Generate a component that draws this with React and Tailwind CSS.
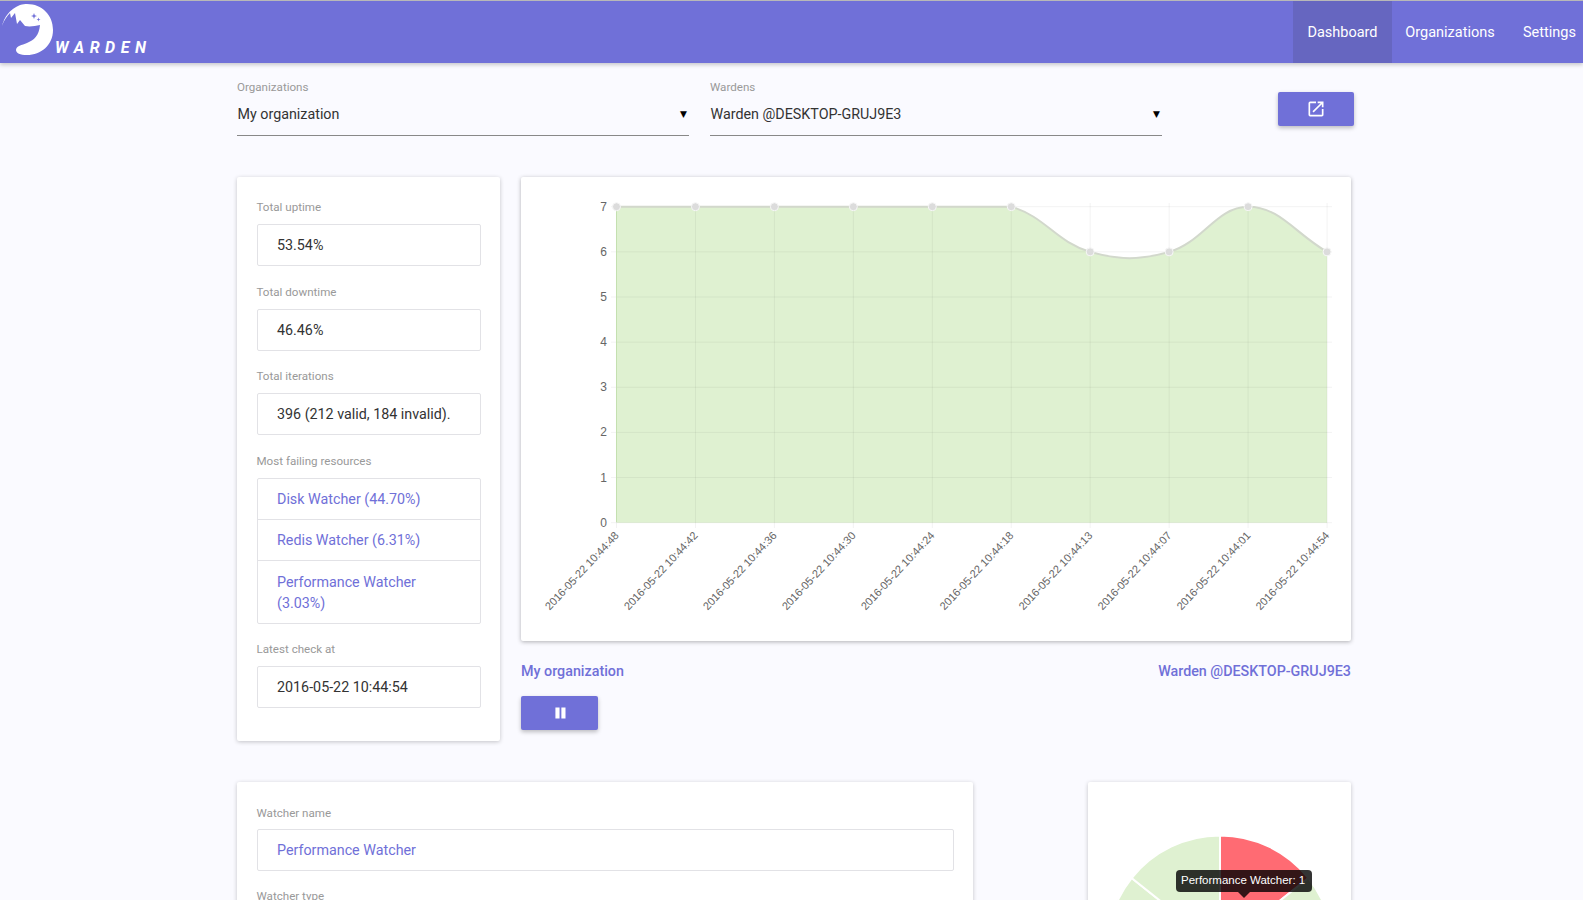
const xLabels = ["10:44:48", "10:44:42", "10:44:36", "10:44:30", "10:44:24", "10:44:18", "10:44:13", "10:44:07", "10:44:01", "10:44:54"];
const values = [7, 7, 7, 7, 7, 7, 6, 6, 7, 6];
const failing = ["Disk Watcher (44.70%)", "Redis Watcher (6.31%)"];

const chartX = (i) => 616.5 + i * 78.95;
const chartY = (v) => 522.7 - v * 45.14;
const points = values.map((v, i) => ({ x: chartX(i), y: chartY(v) }));

// same spline as chart.js with tension .4, control points capped at the chart top
function splinePath(pts) {
  const top = chartY(7);
  const ctrl = pts.map((p, i) => {
    const prev = pts[i - 1] || p;
    const next = pts[i + 1] || p;
    const d01 = Math.hypot(p.x - prev.x, p.y - prev.y);
    const d12 = Math.hypot(next.x - p.x, next.y - p.y);
    const fa = (0.4 * d01) / (d01 + d12 || 1);
    const fb = (0.4 * d12) / (d01 + d12 || 1);
    return {
      px: p.x - fa * (next.x - prev.x),
      py: Math.max(top, p.y - fa * (next.y - prev.y)),
      nx: p.x + fb * (next.x - prev.x),
      ny: Math.max(top, p.y + fb * (next.y - prev.y)),
    };
  });
  let d = `M${pts[0].x} ${pts[0].y}`;
  for (let i = 1; i < pts.length; i++) {
    d += ` C${ctrl[i - 1].nx} ${ctrl[i - 1].ny} ${ctrl[i].px} ${ctrl[i].py} ${pts[i].x} ${pts[i].y}`;
  }
  return d;
}

function Logo() {
  return (
    <svg width="56" height="56" viewBox="0 0 56 56" className="shrink-0">
      <path
        fill="#fff"
        d="M2 25 C4 16 10 8 20 4 C23 3.300 25 3 27 3 C42 3 53 14 53 29 C53 44 41 54 27 54 C20 54 16 52 16 49 C16 45 22 44 27 42 C34 39 39 35 40 24 C35 25 30 26 25 25 L20 19 L17 23 L15 12 L11 17 L10 12 C7 15 4 19 2 25Z"
      />
      <path fill="#7070d8" d="M34 12 L34.800 14.200 L37 15 L34.800 15.800 L34 18 L33.200 15.800 L31 15 L33.200 14.200Z M38.500 16.500 L39 18 L40.500 18.500 L39 19 L38.500 20.500 L38 19 L36.500 18.500 L38 18Z" />
    </svg>
  );
}

function Field({ label, value, className }) {
  return (
    <div className={className}>
      <div className="text-[11.600px] leading-4 text-[#999] mb-[9px]">{label}</div>
      <div className="h-[42px] border border-[#e2e2e6] rounded-[2px] pl-[19.500px] pt-[1px] flex items-center text-[14.300px] text-[#333]">{value}</div>
    </div>
  );
}

function SelectBox({ label, value, className }) {
  return (
    <div className={className}>
      <div className="text-[11.600px] leading-4 text-[#999]">{label}</div>
      <div className="h-[38px] mt-[3px] border-b border-[#888] flex items-center justify-between pl-[0.500px] pr-[2px] pb-[4px] text-[14.300px] text-[#333]">
        <span>{value}</span>
        <span className="text-[9px] text-black font-['DejaVu_Sans']">▼</span>
      </div>
    </div>
  );
}

function LineChart() {
  const line = splinePath(points);
  return (
    <svg width="830" height="463" viewBox="521 177 830 463" className="block">
      <path d={`${line} L${points[9].x} 522.700 L${points[0].x} 522.700Z`} fill="#dff1d1" />
      {[0, 1, 2, 3, 4, 5, 6, 7].map((v) => (
        <line key={v} x1="611" x2="1332" y1={chartY(v)} y2={chartY(v)} stroke="rgba(0,0,0,0.05)" />
      ))}
      {points.map((p, i) => (
        <line key={i} x1={p.x} x2={p.x} y1="203" y2="528" stroke="rgba(0,0,0,0.05)" />
      ))}
      <line x1={points[0].x} x2={points[0].x} y1="207" y2="522" stroke="#c4e0b0" />
      <path d={line} fill="none" stroke="#d2d8cc" strokeWidth="2" />
      {points.map((p, i) => (
        <circle key={i} cx={p.x} cy={p.y} r="4" fill="#dcdcdc" stroke="#f7f7f7" />
      ))}
      {[0, 1, 2, 3, 4, 5, 6, 7].map((v) => (
        <text key={v} x="607" y={chartY(v) + 4} textAnchor="end" fontSize="12" fill="#666" fontFamily="'Liberation Sans', sans-serif">
          {v}
        </text>
      ))}
      {points.map((p, i) => (
        <text
          key={i}
          x={p.x + 3}
          y="536"
          textAnchor="end"
          fontSize="11"
          fill="#666"
          fontFamily="'Liberation Sans', sans-serif"
          transform={`rotate(-47 ${p.x + 3} 536)`}
        >
          {`2016-05-22 ${xLabels[i]}`}
        </text>
      ))}
    </svg>
  );
}

function PieChart() {
  const cx = 132;
  const cy = 166.5;
  const r = 113;
  const slices = [0, 1, 2, 3, 4, 5, 6].map((i) => {
    const a0 = (i * 2 * Math.PI) / 7;
    const a1 = ((i + 1) * 2 * Math.PI) / 7;
    return {
      d: `M${cx} ${cy} L${cx + r * Math.sin(a0)} ${cy - r * Math.cos(a0)} A${r} ${r} 0 0 1 ${cx + r * Math.sin(a1)} ${cy - r * Math.cos(a1)}Z`,
      fill: i === 0 ? "#ff6b73" : "#dff1d1",
    };
  });
  return (
    <svg width="263" height="300" className="block">
      {slices.map((s, i) => (
        <path key={i} d={s.d} fill={s.fill} stroke="#fff" strokeWidth="2" />
      ))}
    </svg>
  );
}

export default function App() {
  return (
    <div className="h-screen overflow-hidden bg-[#fafaff] font-['Roboto',sans-serif]">
      <nav className="h-[63px] bg-[#7070d8] border-t border-t-[#b8b8b8] shadow-[0_2px_4px_rgba(0,0,0,0.2)] flex items-stretch justify-between relative">
        <div className="flex items-start">
          <Logo />
          <span className="mt-[37px] -ml-[1px] text-[16px] leading-5 font-bold italic tracking-[5.500px] text-white">WARDEN</span>
        </div>
        <div className="flex text-[14.500px] text-white">
          <a className="w-[99px] pt-[2px] bg-[#6666c0] flex items-center justify-center">Dashboard</a>
          <a className="w-[116px] pt-[2px] flex items-center justify-center">Organizations</a>
          <a className="w-[75px] pt-[2px] flex items-center justify-start pl-[15px]">Settings</a>
        </div>
      </nav>

      <main className="ml-[237px] w-[1117px]">
        <div className="flex items-start pt-[16px] h-[114px]">
          <SelectBox label="Organizations" value="My organization" className="w-[452px]" />
          <SelectBox label="Wardens" value="Warden @DESKTOP-GRUJ9E3" className="w-[452px] ml-[21px]" />
          <button className="ml-[115.500px] mt-[13px] w-[76.500px] h-[34px] bg-[#7070d8] rounded-[2px] shadow-[0_2px_4px_rgba(0,0,0,0.25)] flex items-center justify-center">
            <svg width="20" height="20" viewBox="0 0 24 24" fill="#fff">
              <path d="M19 19H5V5h7V3H5a2 2 0 0 0-2 2v14a2 2 0 0 0 2 2h14c1.100 0 2-.9 2-2v-7h-2v7zM14 3v2h3.590l-9.830 9.830 1.410 1.410L19 6.410V10h2V3h-7z" />
            </svg>
          </button>
        </div>

        <div className="flex items-start gap-[21px]">
          <section className="w-[263px] h-[564px] bg-white rounded-[2px] shadow-[0_1px_4px_rgba(0,0,0,0.22)] pt-[22px] px-[19.500px]">
            <Field label="Total uptime" value="53.54%" className="mb-[18px]" />
            <Field label="Total downtime" value="46.46%" className="mb-[17px]" />
            <Field label="Total iterations" value="396 (212 valid, 184 invalid)." className="mb-[18px]" />
            <div className="mb-[17px]">
              <div className="text-[11.600px] leading-4 text-[#999] mb-[9px]">Most failing resources</div>
              <div className="border border-[#e2e2e6] rounded-[2px] text-[14.300px] text-[#7070d8]">
                {failing.map((f) => (
                  <div key={f} className="h-[41px] pl-[19.500px] pt-[1px] flex items-center border-b border-[#e2e2e6]">{f}</div>
                ))}
                <div className="pl-[19.500px] pt-[11px] pb-[9px] pr-4 leading-[21px]">Performance Watcher (3.03%)</div>
              </div>
            </div>
            <Field label="Latest check at" value="2016-05-22 10:44:54" />
          </section>

          <div className="w-[830px]">
            <section className="h-[464px] bg-white rounded-[2px] shadow-[0_1px_4px_rgba(0,0,0,0.3)]">
              <LineChart />
            </section>
            <div className="flex justify-between mt-[20px] text-[14.300px] leading-5 font-medium text-[#7070d8]">
              <span>My organization</span>
              <span>Warden @DESKTOP-GRUJ9E3</span>
            </div>
            <button className="mt-[15px] w-[77px] h-[34px] bg-[#7070d8] rounded-[2px] shadow-[0_2px_4px_rgba(0,0,0,0.25)] flex items-center justify-center">
              <svg width="22" height="22" viewBox="0 0 24 24" fill="#fff">
                <path d="M7 6h4.500v12H7zM13.500 6H18v12h-4.500z" />
              </svg>
            </button>
          </div>
        </div>

        <div className="flex items-start justify-between w-[1114px] mt-[41px]">
          <section className="w-[736px] h-[300px] bg-white rounded-[2px] shadow-[0_1px_4px_rgba(0,0,0,0.22)] pt-[23px] px-[19.500px]">
            <div className="text-[11.600px] leading-4 text-[#999] mb-[8px]">Watcher name</div>
            <div className="h-[42px] border border-[#e2e2e6] rounded-[2px] pl-[19.500px] pt-[1px] flex items-center text-[14.300px] text-[#7070d8] mb-[17px]">Performance Watcher</div>
            <div className="text-[11.600px] leading-4 text-[#999]">Watcher type</div>
          </section>
          <section className="relative w-[263px] h-[300px] bg-white rounded-[2px] shadow-[0_1px_4px_rgba(0,0,0,0.22)]">
            <PieChart />
            <div className="absolute left-[88px] top-[88px] h-[22px] w-[136px] bg-black/80 rounded-[4px] pl-[5px] flex items-center whitespace-nowrap text-[11.500px] text-white font-['Liberation_Sans',sans-serif]">
              Performance Watcher: 1
              <span className="absolute left-[62px] top-[22px] border-x-[6px] border-x-transparent border-t-[6px] border-t-black/80" />
            </div>
          </section>
        </div>
      </main>
    </div>
  );
}
